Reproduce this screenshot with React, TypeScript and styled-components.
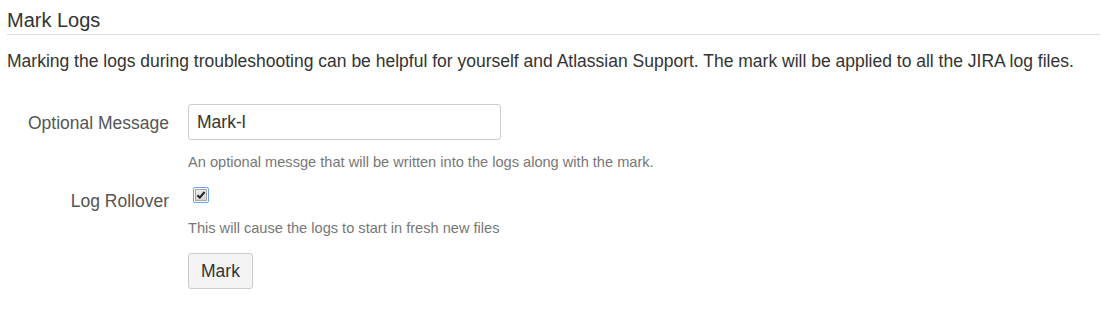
import React from "react";
import styled, { createGlobalStyle } from "styled-components";

const Global = createGlobalStyle`
  html, body { margin: 0; padding: 0; background: #fff; }
  body { font-family: "Liberation Sans", Arial, sans-serif; color: #333; }
  * { box-sizing: border-box; }
`;

const Page = styled.div`
  padding: 8px 1px 0 7px;
`;

const Title = styled.h3`
  margin: 0;
  font-size: 20px;
  font-weight: normal;
  line-height: 24px;
  color: #333;
  padding-bottom: 2px;
  border-bottom: 1px solid #ddd;
`;

const Intro = styled.p`
  margin: 14px 0 0;
  font-size: 17.5px;
  line-height: 24px;
  color: #333;
  white-space: nowrap;
`;

const Form = styled.form`
  margin-top: 31px;
  display: grid;
  grid-template-columns: 162px 313px;
  column-gap: 19px;
  row-gap: 15px;
  align-items: start;
`;

const Label = styled.label<{ $top: number }>`
  text-align: right;
  font-size: 17.5px;
  line-height: 24px;
  color: #555;
  white-space: nowrap;
  padding-top: ${(p) => p.$top}px;
`;

const Field = styled.div<{ $gap: number }>`
  display: flex;
  flex-direction: column;
  align-items: flex-start;
  gap: ${(p) => p.$gap}px;
`;

const Input = styled.input`
  width: 313px;
  height: 36px;
  padding: 0 8px;
  font-family: inherit;
  font-size: 17.5px;
  color: #333;
  border: 1px solid #ccc;
  border-radius: 3px;
  background: #fff;
  outline: none;
`;

const Help = styled.div`
  font-size: 14.6px;
  line-height: 20px;
  color: #777;
  white-space: nowrap;
`;

const CheckBox = styled.span`
  margin-left: 5px;
  width: 16px;
  height: 16px;
  display: flex;
  align-items: center;
  justify-content: center;
  border: 1px solid #6fa3f0;
  border-radius: 2px;
  background: #fff;
`;

const CheckInner = styled.span`
  width: 12px;
  height: 12px;
  background: linear-gradient(#ececec, #d6d6d6);
  border: 1px solid #a9a9a9;
  display: flex;
  align-items: center;
  justify-content: center;
`;

const Button = styled.button`
  width: 65px;
  height: 36px;
  font-family: inherit;
  font-size: 17.5px;
  color: #333;
  background: #f4f4f4;
  border: 1px solid #ccc;
  border-radius: 3px;
  padding: 0;
`;

export default function App() {
  return (
    <>
      <Global />
      <Page>
        <Title>Mark Logs</Title>
        <Intro>
          Marking the logs during troubleshooting can be helpful for yourself and Atlassian Support. The mark will be applied to all the JIRA log files.
        </Intro>
        <Form onSubmit={(e) => e.preventDefault()}>
          <Label $top={7}>Optional Message</Label>
          <Field $gap={12}>
            <Input defaultValue="Mark-l" />
            <Help>An optional messge that will be written into the logs along with the mark.</Help>
          </Field>
          <Label $top={2}>Log Rollover</Label>
          <Field $gap={15}>
            <CheckBox>
              <CheckInner>
                <svg width="10" height="10" viewBox="0 0 10 10">
                  <path d="M1.5 5.2 L3.8 7.6 L8.6 2" fill="none" stroke="#222" strokeWidth="2" />
                </svg>
              </CheckInner>
            </CheckBox>
            <Help>This will cause the logs to start in fresh new files</Help>
            <Button type="button">Mark</Button>
          </Field>
        </Form>
      </Page>
    </>
  );
}
